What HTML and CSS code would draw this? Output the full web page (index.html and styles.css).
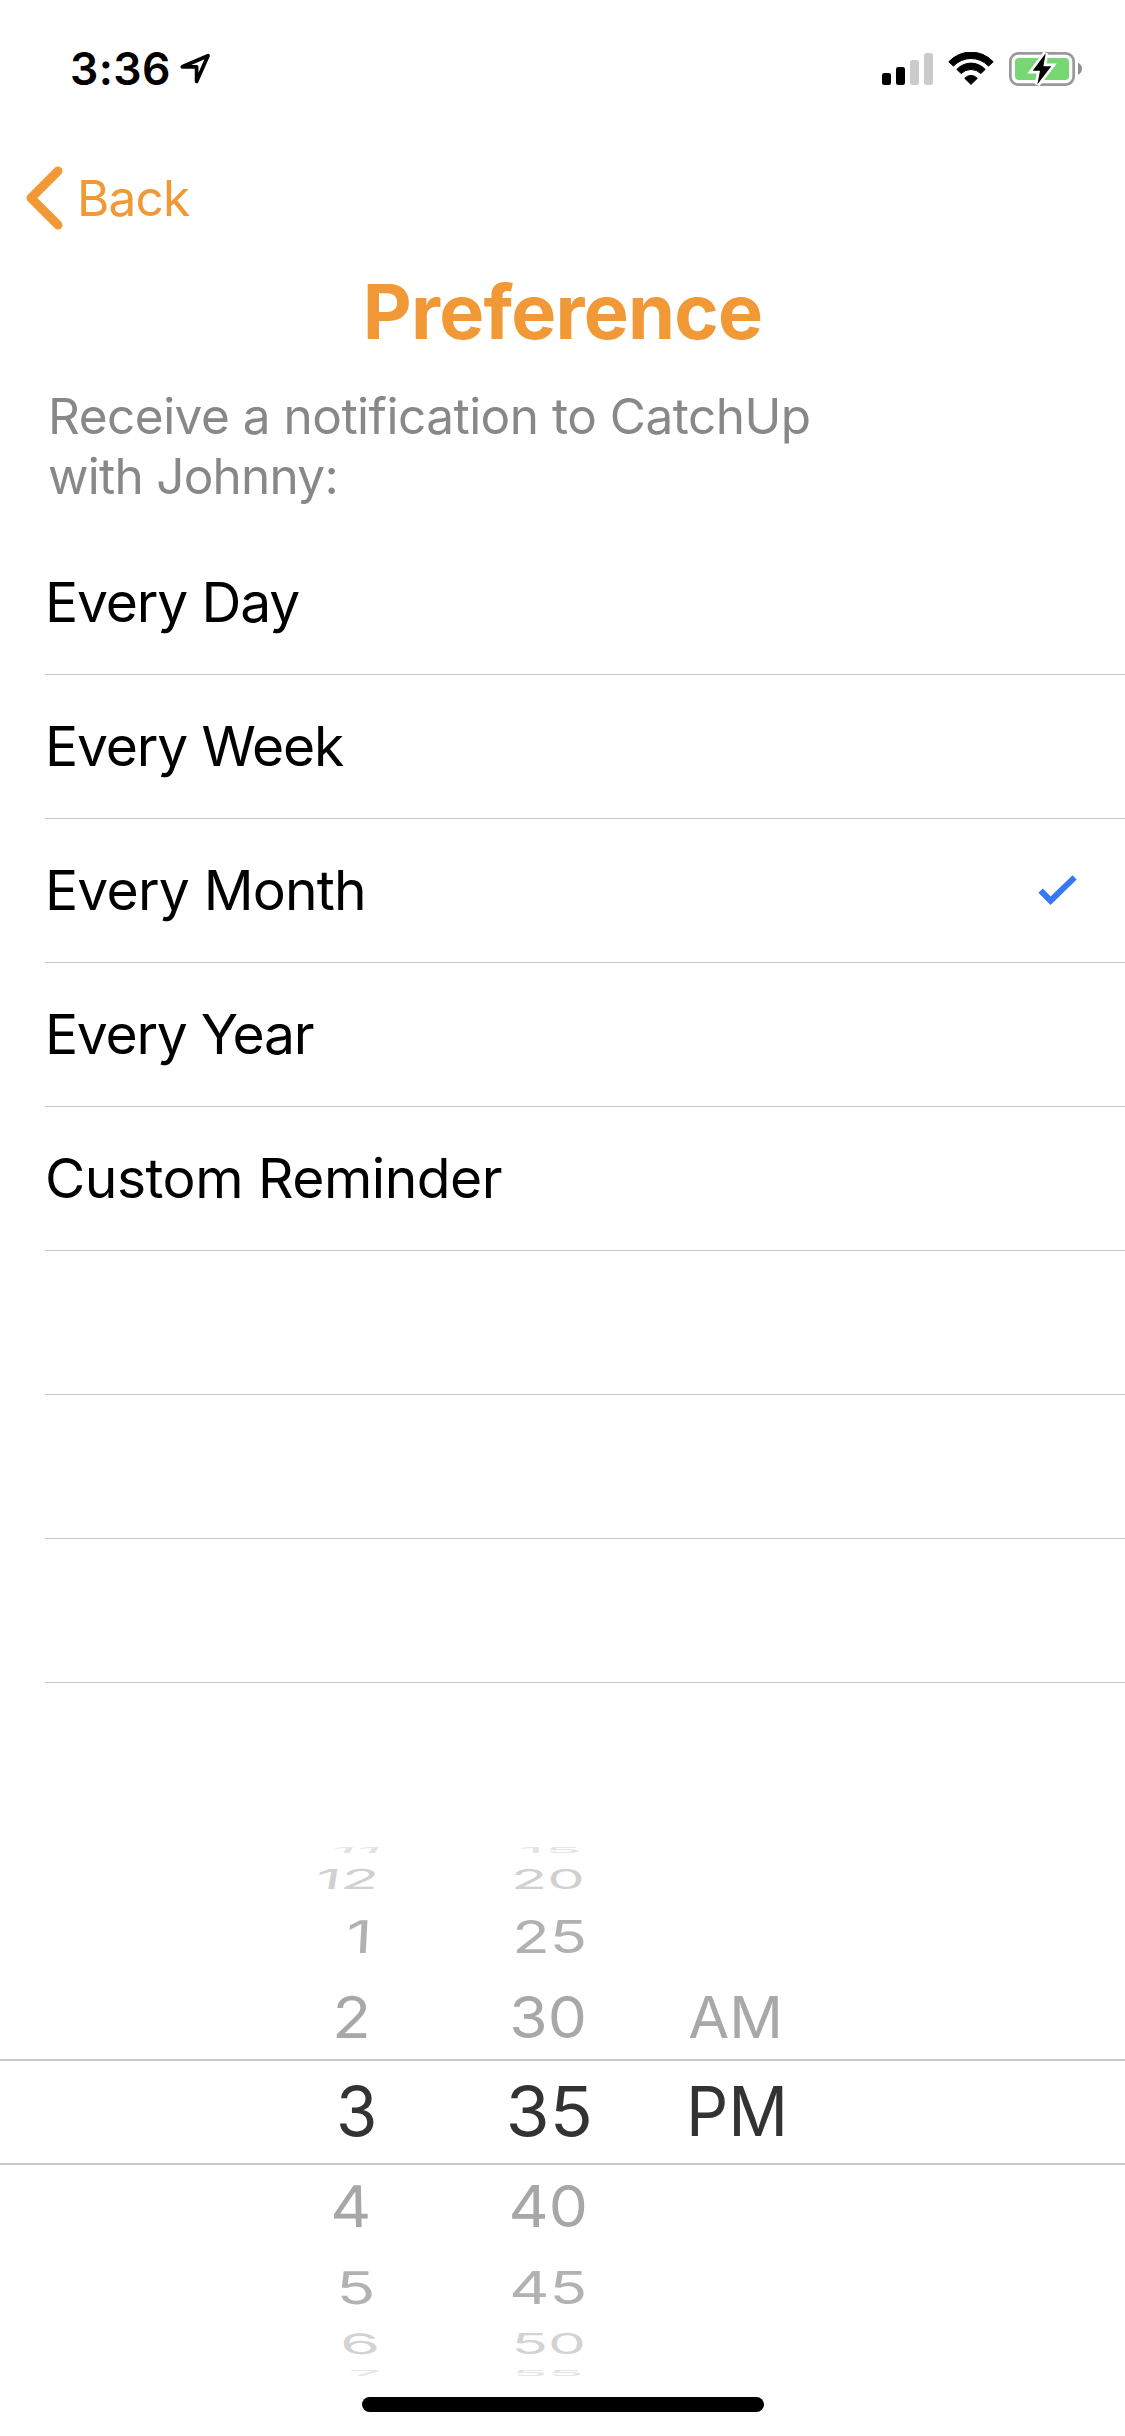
FILE: index.html
```html
<!DOCTYPE html>
<html lang="en">
<head>
<meta charset="utf-8">
<title>Preference</title>
<link rel="stylesheet" href="styles.css">
</head>
<body>
<div class="screen">
  <header class="status">
    <div class="status-left">
      <span class="time">3:36</span>
      <svg class="location" width="32" height="32" viewBox="0 0 32 32"><path d="M3.3 13.8 29 2.7 17.6 28.4V13.8Z"/></svg>
    </div>
    <div class="status-right">
      <svg width="51" height="34" viewBox="0 0 51 34">
        <rect x="0" y="21" width="9" height="12" rx="2.3"/>
        <rect x="14" y="15" width="9" height="18" rx="2.3"/>
        <rect class="dim" x="28" y="8" width="9" height="25" rx="2.3"/>
        <rect class="dim" x="42" y="1" width="9" height="32" rx="2.3"/>
      </svg>
      <svg width="46" height="34" viewBox="0 0 46 34">
        <path class="wifi" d="M.8 9.8A30.2 30.2 0 0 1 45.2 9.8L40.6 14.1A24.2 24.2 0 0 0 5.4 14.1Z"/>
        <path class="wifi" d="M8.8 17.4A19.2 19.2 0 0 1 37.2 17.4L32.8 21.5A14 14 0 0 0 13.2 21.5Z"/>
        <path class="wifi" d="M16.7 26.3A8.3 8.3 0 0 1 29.3 26.3L23 32.4Z"/>
      </svg>
      <svg width="73" height="34" viewBox="0 0 73 34">
        <rect class="case" x="1.35" y="1.35" width="63.3" height="31.3" rx="8"/>
        <path class="nub" d="M69 10.7C74.3 12.6 74.3 20.8 69 22.7Z"/>
        <rect class="charge" x="6" y="6" width="54" height="22" rx="4"/>
        <path class="bolt" d="M36.7 1.3 23.7 18.8H31L28.3 32.5 42.3 14.2H34.4Z"/>
      </svg>
    </div>
  </header>

  <nav class="nav">
    <svg width="40" height="66" viewBox="0 0 40 66"><path class="chevron" d="M34 6 7 33 34 60"/></svg>
    <span class="back">Back</span>
  </nav>

  <h1 class="title">Preference</h1>
  <p class="intro">Receive a notification to CatchUp<br><span class="intro-end">with Johnny:</span></p>

  <ul class="options">
    <li class="day">Every Day</li>
    <li class="week">Every Week</li>
    <li class="month">Every Month
      <svg class="tick" width="40" height="32" viewBox="0 0 40 32"><path class="check" d="M2.6 15.6 12.6 25.7 36.6 2.4"/></svg>
    </li>
    <li class="year">Every Year</li>
    <li class="custom">Custom Reminder</li>
    <li></li>
    <li></li>
    <li></li>
  </ul>

  <div class="wheel">
    <div class="row up4"><span class="hour">11</span><span class="minute">15</span></div>
    <div class="row up3"><span class="hour">12</span><span class="minute">20</span></div>
    <div class="row up2"><span class="hour">1</span><span class="minute">25</span></div>
    <div class="row up1"><span class="hour">2</span><span class="minute">30</span><span class="period">AM</span></div>
    <div class="row selected"><span class="hour">3</span><span class="minute">35</span><span class="period">PM</span></div>
    <div class="row down1"><span class="hour">4</span><span class="minute">40</span></div>
    <div class="row down2"><span class="hour">5</span><span class="minute">45</span></div>
    <div class="row down3"><span class="hour">6</span><span class="minute">50</span></div>
    <div class="row down4"><span class="hour">7</span><span class="minute">55</span></div>
  </div>

  <div class="home"></div>
</div>
</body>
</html>
```
FILE: styles.css
```css
* { box-sizing: border-box; }
body {
  margin: 0;
  background: #fff;
  color: #000;
  font-family: Inter, "Liberation Sans", sans-serif;
}
svg { display: block; flex: none; }
.screen {
  width: 1125px;
  height: 2436px;
  overflow: hidden;
  display: flex;
  flex-direction: column;
}

/* Status bar */
.status {
  height: 138px;
  flex: none;
  padding: 0 43px 0 70px;
  display: flex;
  align-items: center;
  justify-content: space-between;
}
.status-left, .status-right { display: flex; align-items: center; }
.status-right { gap: 15px; }
.time { width: 109px; font-size: 44.5px; line-height: 54px; font-weight: 600; letter-spacing: .4px; }
.location { fill: none; stroke: #000; stroke-width: 3.7; stroke-linejoin: round; }
.dim { fill: #cbcbcb; }
.wifi { stroke: #000; stroke-width: 1; stroke-linejoin: round; }
.case { fill: none; stroke: #999; stroke-width: 2.7; }
.nub { fill: #8f8f8f; }
.charge { fill: #77d873; }
.bolt { stroke: #fff; stroke-width: 5.4; paint-order: stroke; }

/* Navigation */
.nav {
  height: 120px;
  flex: none;
  padding-left: 24px;
  display: flex;
  align-items: center;
  gap: 13px;
  color: #f19937;
}
.chevron { fill: none; stroke: currentColor; stroke-width: 9; stroke-linecap: round; stroke-linejoin: round; }
.back { font-size: 49.5px; line-height: 60px; letter-spacing: -.8px; }

/* Heading */
.title {
  margin: 0;
  height: 107px;
  flex: none;
  text-align: center;
  color: #f19937;
  font-size: 75.6px;
  line-height: 107px;
  font-weight: 700;
  letter-spacing: -.75px;
}
.intro {
  margin: 21px 0 25px 48px;
  flex: none;
  color: #888;
  font-size: 49.5px;
  line-height: 60px;
  letter-spacing: -.5px;
}
.intro-end { letter-spacing: -.75px; }

/* Frequency list */
.options { margin: 0; padding: 0 0 0 45px; list-style: none; flex: none; }
.options li {
  height: 144px;
  padding: 0 47px 2px 0;
  border-bottom: 1px solid #c8c8c8;
  display: flex;
  align-items: center;
  justify-content: space-between;
  font-size: 55.2px;
  letter-spacing: -1.15px;
}
.options .month { letter-spacing: -.8px; }
.options .year { letter-spacing: -1.3px; }
.options .custom { letter-spacing: -.5px; }
.tick { margin-top: 3px; }
.check { fill: none; stroke: #3478f6; stroke-width: 6; }

/* Time wheel: each row is foreshortened as it turns away from the centre */
.wheel { margin-top: 156.4px; flex: none; font-size: 68.3px; }
.row {
  padding-left: 259.5px;
  display: grid;
  grid-template-columns: 193px 193px 181px;
  align-items: center;
  justify-items: center;
}
.row span {
  height: 0;
  line-height: 0;
  white-space: nowrap;
  transform: translateX(var(--dx, 0px)) skewX(var(--lean, 0deg)) scale(var(--sx, .9), var(--sy, 1));
}
.up4 { height: 21.2px; --sy: .12; color: #e3e3e3; }
.up3 { height: 36.4px; --sy: .4; color: #d0d0d0; }
.up2 { height: 79px; --sy: .66; color: #b1b1b1; }
.up1 { height: 83px; --sy: .84; color: #a8a8a8; }
.selected {
  height: 106px;
  padding-bottom: 1.5px;
  border-top: 2px solid #cbcbcb;
  border-bottom: 2px solid #cbcbcb;
  color: #333;
}
.down1 { height: 81.6px; --sy: .84; color: #a7a7a7; }
.down2 { height: 80.4px; --sy: .66; color: #b2b2b2; }
.down3 { height: 34.8px; --sy: .41; color: #d3d3d3; }
.down4 { height: 22.4px; --sy: .115; color: #e3e3e3; }

.up4 .hour { --sx: .92; --dx: .9px; --lean: -32deg; }
.up3 .hour { --sx: .91; --dx: -8.2px; --lean: -9deg; }
.up2 .hour { --sx: .93; --dx: 3.4px; --lean: -3deg; }
.up1 .hour { --sx: .93; --dx: -4.2px; --lean: -1deg; }
.selected .hour { --sx: .98; --dx: .6px; }
.down1 .hour { --sx: .93; --dx: -5.4px; --lean: 1deg; }
.down2 .hour { --sx: .94; --dx: -.2px; --lean: 3deg; }
.down3 .hour { --sx: .94; --dx: 3.7px; --lean: 7deg; }
.down4 .hour { --sx: .86; --dx: 9.8px; --lean: 25deg; }

.up4 .minute { --sx: .91; --dx: 1.7px; }
.up3 .minute { --sx: .87; --dx: -1.6px; }
.up2 .minute { --sx: .9; --dx: 1px; }
.up1 .minute { --sx: .91; --dx: -.6px; }
.selected .minute { --sx: 1.04; --dx: .45px; }
.down1 .minute { --sx: .91; --dx: -.4px; }
.down2 .minute { --sx: .91; --dx: -.6px; }
.down3 .minute { --sx: .88; --dx: -.6px; }
.down4 .minute { --sx: .86; --dx: -.7px; }

.up1 .period { --sx: .87; --dx: -.7px; }
.selected .period { --sx: .97; --dx: 1.4px; }

.home {
  width: 402px;
  height: 15px;
  margin: 12.8px auto 0;
  flex: none;
  border-radius: 8px;
  background: #000;
}
```
